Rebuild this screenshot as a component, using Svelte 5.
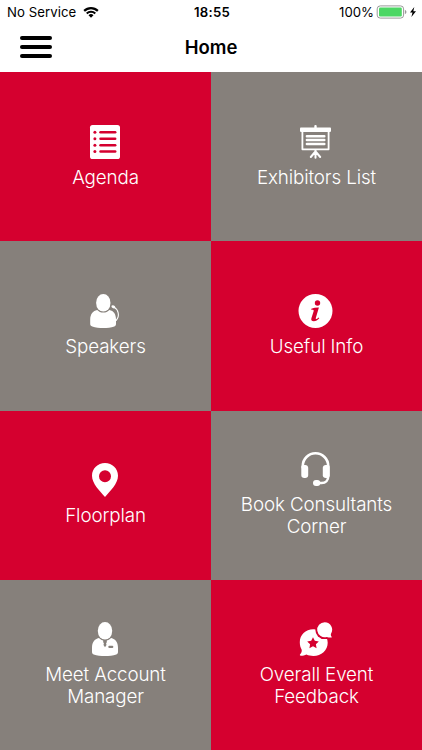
<script lang="ts">
  type Tile = { icon: string; lines: string[]; red: boolean };

  const tiles: Tile[] = [
    { icon: "agenda", lines: ["Agenda"], red: true },
    { icon: "board", lines: ["Exhibitors List"], red: false },
    { icon: "speaker", lines: ["Speakers"], red: false },
    { icon: "info", lines: ["Useful Info"], red: true },
    { icon: "pin", lines: ["Floorplan"], red: true },
    { icon: "headset", lines: ["Book Consultants", "Corner"], red: false },
    { icon: "manager", lines: ["Meet Account", "Manager"], red: false },
    { icon: "feedback", lines: ["Overall Event", "Feedback"], red: true },
  ];
</script>

<div class="screen">
  <header>
    <div class="status">
      <div class="side">
        <span class="carrier">No Service</span>
        <svg class="wifi" width="16" height="12" viewBox="0 0 16 12">
          <path d="M0.4 4.1a10.8 10.8 0 0 1 15.2 0l-1.5 1.6a8.6 8.6 0 0 0-12.2 0z" />
          <path d="M3 6.8a7.1 7.1 0 0 1 10 0l-1.5 1.5a5 5 0 0 0-7 0z" />
          <path d="M5.5 9.3a3.6 3.6 0 0 1 5 0L8 11.8z" />
        </svg>
      </div>
      <span class="time">18:55</span>
      <div class="side right">
        <span class="percent">100%</span>
        <svg class="battery" width="40" height="14" viewBox="0 0 40 14">
          <rect x="0.2" y="0.9" width="26.4" height="12.2" rx="3" fill="#fff" stroke="#999" stroke-width="1" />
          <rect x="2" y="2.6" width="22.8" height="8.8" rx="1.2" fill="#4cd764" />
          <path d="M27.9 5v4c1-.3 1.5-1.1 1.5-2s-.5-1.7-1.5-2z" fill="#999" />
          <path d="M37.3 2 33 7.6h2.5L34.4 12 39 6.2h-2.7z" />
        </svg>
      </div>
    </div>
    <nav>
      <button class="menu" aria-label="Menu"><i></i><i></i><i></i></button>
      <h1>Home</h1>
    </nav>
  </header>

  <main>
    {#each tiles as tile}
      <div class="tile" class:red={tile.red}>
        <svg class="icon" width="34" height="34" viewBox="0 0 34 34">
          {#if tile.icon === "agenda"}
            <rect x="2" y="0" width="30" height="34" rx="2.6" />
            {#each [7.2, 13.7, 20.2, 26.5] as y}
              <circle class="hole" cx="6.9" cy={y} r="1.5" />
              <path class="cut" d="M12.5 {y}h14.7" stroke-width="2.5" />
            {/each}
          {:else if tile.icon === "board"}
            <rect x="15.3" y="0" width="2.4" height="4" rx="1" />
            <rect x="1" y="2.5" width="31" height="4.4" rx="0.8" />
            <path class="line" d="M3.4 6v18.3h26.2V6" stroke-width="1.8" />
            <path class="line" d="M7.9 11.3h17.4M7.9 15.1h17.4M7.9 18.9h17.4" stroke-width="2.5" />
            <path class="line" d="M16.5 25v7.7M16 27l-4.2 5M17 27l4.2 5" stroke-width="2" />
          {:else if tile.icon === "speaker"}
            <rect x="8.2" y="0" width="14.2" height="17.6" rx="7.1" ry="8.2" />
            <path d="M9.2 16c1.5 1.7 3.6 2.6 6.1 2.6s4.6-.9 6.1-2.6c4.2.8 6.6 4.2 6.6 9.5v4.2c0 1.3-.5 2.2-1.7 2.7-6.5 2.1-15.5 2.1-22 0-1.6-.5-2.1-1.4-2.1-2.7v-4.2c0-5.3 2.8-8.7 7-9.5z" />
            <path class="line" d="M25.5 12.8c5 2.7 6.6 9.2 2.7 13.5" stroke-width="1.1" />
            <ellipse cx="25.3" cy="12.8" rx="2" ry="1.4" transform="rotate(30 25.3 12.8)" />
          {:else if tile.icon === "info"}
            <circle cx="16.5" cy="17" r="17" />
            <circle class="hole" cx="18.5" cy="9" r="2.7" />
            <path class="hole" d="M12.3 14.8c2.4-.8 4.9-1.3 7.6-1.2L16.8 24c-.4 1.3.7 1.3 2.7-.6l.8.8c-1.7 2-3.5 3-5.5 3-2 0-3-1-2.4-2.9l2.3-7.4c.2-.8-.4-1.2-2.4-1.1z" />
          {:else if tile.icon === "pin"}
            <path fill-rule="evenodd" d="M17 0C9.7 0 4 5.6 4 12.7 4 20.5 12 28.2 17 34c5-5.8 13-13.5 13-21.3C30 5.6 24.3 0 17 0zm0 7.2a6 6 0 1 1 0 12 6 6 0 0 1 0-12z" />
          {:else if tile.icon === "headset"}
            <path class="line" d="M3.8 15.5V14a12.7 12.7 0 0 1 25.4 0v10.2c0 4-2.4 6.8-6.6 6.8H18" stroke-width="2.6" />
            <path d="M2.3 15c0-1.3.8-2 2-2h2c1.6 0 2.9 1.1 2.9 2.8v7.4c0 1.7-1.3 2.8-2.9 2.8h-1c-1.8 0-3-1-3-2.7z" />
            <path d="M30.7 15c0-1.3-.8-2-2-2h-2c-1.6 0-2.9 1.1-2.9 2.8v7.4c0 1.7 1.3 2.8 2.9 2.8h1c1.8 0 3-1 3-2.7z" />
            <rect x="14" y="28" width="7.3" height="6" rx="3" />
          {:else if tile.icon === "manager"}
            <rect x="9.9" y="0" width="14.2" height="17.6" rx="7.1" ry="8.2" />
            <path d="M10.9 16c1.5 1.7 3.6 2.6 6.1 2.6s4.6-.9 6.1-2.6c4.4.9 6.9 4.5 6.9 9.7v4c0 1.3-.5 2.2-1.7 2.7-6.5 2.1-16.1 2.1-22.6 0C4.5 31.9 4 31 4 29.7v-4c0-5.2 2.5-8.8 6.9-9.7z" />
            <path class="hole" d="M15.2 17.9h3.6v2.3l-.7 1 .4 1.9L17 25.2l-1.5-2.1.4-1.9-.7-1z" />
            <rect class="hole" x="20.3" y="23.7" width="5" height="2.2" rx="1" />
          {:else}
            <path d="M14.4 7.3C6.4 7.3.8 13 .8 20.2c0 3.4.8 5.3 1.8 7.4.5 1.5-.1 3.2-1.6 5-.4.7 0 1.2.8 1.2 2.2 0 4-.3 5.7-1.2 2 1 4.3 1.4 6.9 1.4 8 0 14.3-5.8 14.3-13.3 0-7.3-6.3-13.4-14.3-13.4z" />
            <circle class="hole" cx="25.6" cy="7.8" r="9.3" />
            <path d="M25.7.2a7.5 7.5 0 1 0 2.1 14.7c1.4.6 2.9.8 4.4.7.6-.1.7-.5.4-.9-.7-1-1-1.9-.6-3C35.3 6.7 31.6.2 25.7.2z" />
            <path class="hole" d="m14 15.2 1.8 3.6 4 .6-2.9 2.8.7 4-3.6-1.9-3.6 1.9.7-4-2.9-2.8 4-.6z" />
          {/if}
        </svg>
        <div class="label">
          {#each tile.lines as line}
            <span>{line}</span>
          {/each}
        </div>
      </div>
    {/each}
  </main>
</div>

<style>
  :global(body) {
    margin: 0;
    background: #fff;
  }
  .screen {
    display: flex;
    flex-direction: column;
    width: 422px;
    height: 750px;
    overflow: hidden;
    background: #fff;
    color: #000;
    font-family: Inter, "Liberation Sans", sans-serif;
  }
  header {
    height: 72px;
    flex: none;
  }
  .status {
    display: flex;
    align-items: center;
    height: 24px;
    padding: 0 5px 0 7px;
    font-size: 13.2px;
    line-height: 24px;
  }
  .side {
    display: flex;
    flex: 1;
    align-items: center;
  }
  .right {
    justify-content: flex-end;
  }
  .carrier {
    letter-spacing: 0.05px;
  }
  .wifi {
    margin-left: 7px;
  }
  .time {
    font-weight: 600;
    letter-spacing: 0.2px;
  }
  .battery {
    margin-left: 3px;
    overflow: visible;
  }
  nav {
    display: grid;
    grid-template-columns: 1fr auto 1fr;
    align-items: center;
    height: 46px;
    padding: 0 20px;
  }
  .menu {
    display: flex;
    flex-direction: column;
    gap: 5px;
    width: 32px;
    padding: 0;
    border: 0;
    background: none;
  }
  .menu i {
    height: 4px;
    border-radius: 2px;
    background: #000;
  }
  h1 {
    margin: 0;
    font-size: 18.5px;
    font-weight: 600;
    line-height: 24px;
  }
  main {
    display: grid;
    grid-template-columns: 1fr 1fr;
    grid-auto-rows: 169.4px;
    flex: 1;
  }
  .tile {
    --tile: #86807b;
    display: flex;
    flex-direction: column;
    align-items: center;
    justify-content: center;
    background: var(--tile);
    color: #fff;
  }
  .tile.red {
    --tile: #d5002f;
  }
  .icon {
    margin-right: 1px;
    overflow: visible;
    fill: #fff;
  }
  .hole {
    fill: var(--tile);
  }
  .cut,
  .line {
    fill: none;
    stroke: #fff;
    stroke-linecap: round;
    stroke-linejoin: round;
  }
  .cut {
    stroke: var(--tile);
  }
  .label {
    display: flex;
    flex-direction: column;
    align-items: center;
    margin-top: 8px;
    font-size: 18.8px;
    font-weight: 300;
    letter-spacing: -0.12px;
    line-height: 22.2px;
    white-space: nowrap;
  }
</style>
